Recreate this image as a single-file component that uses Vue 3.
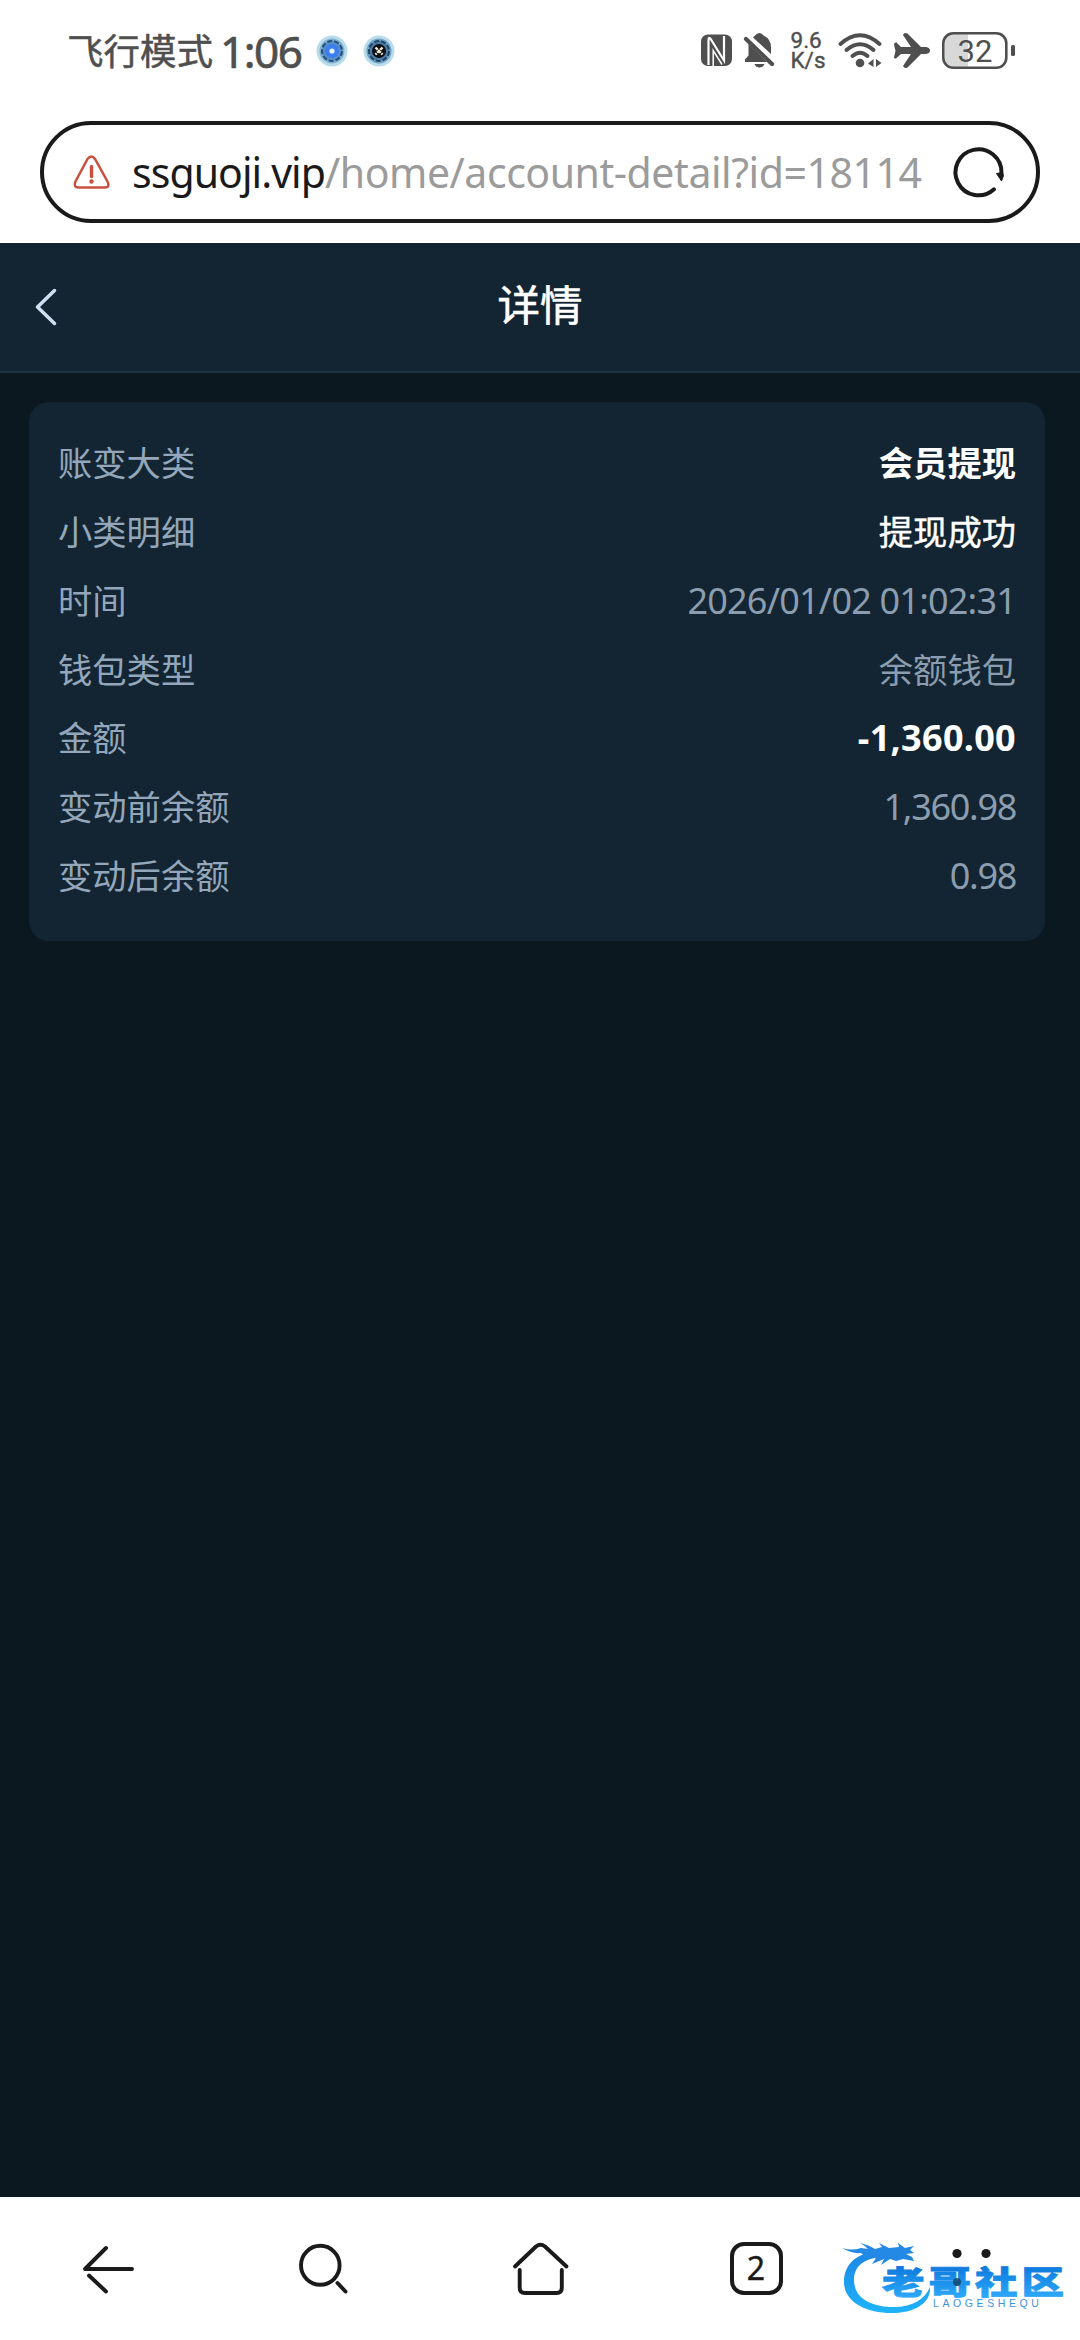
<script setup>
import { ref } from 'vue'

const rows = ref([
  { label: '账变大类', value: '会员提现', type: 'strong' },
  { label: '小类明细', value: '提现成功', type: 'white' },
  { label: '时间', value: '2026/01/02 01:02:31', type: 'num' },
  { label: '钱包类型', value: '余额钱包', type: '' },
  { label: '金额', value: '-1,360.00', type: 'amount' },
  { label: '变动前余额', value: '1,360.98', type: 'num balance' },
  { label: '变动后余额', value: '0.98', type: 'num balance' }
])
</script>

<template>
  <div class="screen">
    <!-- status bar -->
    <div class="status">
      <span class="mode">飞行模式</span>
      <span class="clock">1:06</span>
      <svg class="badges" viewBox="314 32 82 36" width="82" height="36">
        <circle cx="332" cy="50" r="15.5" fill="#b9dcea" />
        <circle cx="332" cy="50" r="12.5" fill="#7fb0cf" />
        <circle cx="332" cy="50" r="10" fill="#5b8fc4" stroke="#24507f" stroke-width="2" stroke-dasharray="5 2" />
        <circle cx="332" cy="50" r="7" fill="#3c7df0" />
        <circle cx="332" cy="50" r="2.6" fill="#e8f2ff" />
        <circle cx="379" cy="50" r="15.5" fill="#b9dcea" />
        <circle cx="379" cy="50" r="12.5" fill="#6fa0c2" />
        <circle cx="379" cy="50" r="10" fill="#4c7ba6" stroke="#1f4565" stroke-width="2" stroke-dasharray="5 2" />
        <circle cx="379" cy="50" r="7" fill="#0d0f14" />
        <path d="M375.500 46.500l7 7M382.500 46.500l-7 7" stroke="#f4ecd8" stroke-width="2.4" stroke-dasharray="3.2 1" />
      </svg>
      <div class="status-right">
        <svg viewBox="700 32 76 38" width="76" height="38">
          <rect x="701" y="34.5" width="31" height="31.5" rx="7" fill="#4f4f4f" />
          <path d="M708.500 65V40Q708.500 36 711 39.500L724 60.500V36" stroke="#fff" stroke-width="2.200" fill="none" />
          <path d="M713.200 66V50.500L722 64.500" stroke="#fff" stroke-width="1.500" fill="none" />
          <path d="M755 35.500q2-2.500 4.500-2.500t4 2.500q7.500 3.500 7.500 12v6.500L753 37.500z" fill="#4f4f4f" />
          <path d="M748.500 44L767 62H745v-2.500l3.500-4z" fill="#4f4f4f" />
          <path d="M746 39L772 64" stroke="#4f4f4f" stroke-width="4.200" stroke-linecap="round" />
          <path d="M754.500 64h10q-1.500 3.500-5 3.500t-5-3.500z" fill="#4f4f4f" />
        </svg>
        <div class="net"><span>9.6</span><span>K/s</span></div>
        <svg viewBox="838 32 44 38" width="44" height="38">
          <g fill="none" stroke="#4f4f4f" stroke-width="4" stroke-linecap="round">
            <path d="M840.500 44Q860 26.500 879.500 44" />
            <path d="M846.500 50Q860 38.500 873.500 50" />
            <path d="M852.500 56Q860 49.500 867.500 56" />
          </g>
          <circle cx="860" cy="63" r="4.300" fill="#4f4f4f" />
          <path d="M873.500 59v8l-5.500-3.500zM876 59v8l5.500-4z" fill="#4f4f4f" />
        </svg>
        <svg class="plane" viewBox="893 32 38 38" width="38" height="38">
          <path d="M896 42l5 5h10l-8-12q1-3 4.500-1.500L921 47h5q4 .5 4 3.500t-4 3.500h-5l-13.500 13.500q-3 1.500-4.500-1.500l8-12h-10l-5 4.500q-2 .5-2-1.500l1.500-6-1.500-6.500q0-2 2-2z" fill="#4f4f4f" />
        </svg>
        <svg class="battery" viewBox="942 32 74 38" width="74" height="38">
          <path d="M953 34h15v33h-15q-8-1-8-9V43q0-8 8-9z" fill="#d8d8d8" />
          <rect x="943.300" y="33.300" width="63" height="34.500" rx="10" fill="none" stroke="#4f4f4f" stroke-width="2.600" />
          <rect x="1011" y="45" width="4" height="11" rx="1.500" fill="#4f4f4f" />
          <text class="charge" x="957.500" y="61.500">32</text>
        </svg>
      </div>
    </div>

    <!-- address bar -->
    <div class="address">
      <svg viewBox="72 152 40 38" width="40" height="38" fill="none" stroke="#c9503f">
        <path d="M87.500 158L75.500 180.500Q73 186.500 78.500 186.500H104.500Q110.500 186.500 107.500 180.500L95 158Q91.500 153 87.500 158Z" stroke-width="2.500" />
        <path d="M91.500 165.500V175.500" stroke-width="3.400" stroke-linecap="round" />
        <circle cx="91.500" cy="180.500" r="2.200" fill="#c9503f" stroke="none" />
      </svg>
      <div class="url"><span class="host">ssguoji.vip</span><span class="path">/home/account-detail?id=18114</span></div>
      <svg viewBox="952 144 54 54" width="54" height="54">
        <path d="M994 188.300A23 23 0 1 1 1001.500 172" fill="none" stroke="#1a1a1a" stroke-width="4" stroke-linecap="round" />
        <path d="M996.500 172.500l6-1 1 3-2 5.500z" fill="#1a1a1a" stroke="#1a1a1a" stroke-linejoin="round" />
      </svg>
    </div>

    <!-- page header -->
    <div class="header">
      <svg class="back" viewBox="33 286 26 42" width="26" height="42">
        <path d="M54.500 290.500L37.500 307L54.500 323.500" />
      </svg>
      <h1>详情</h1>
    </div>

    <main>
      <div class="card">
        <div v-for="row in rows" :key="row.label" class="row">
          <span class="label">{{ row.label }}</span>
          <span class="value" :class="row.type">{{ row.value }}</span>
        </div>
      </div>
    </main>

    <!-- browser toolbar -->
    <nav class="toolbar">
      <svg viewBox="78 2239 60 60" width="60" height="60">
        <path d="M132 2269H85L106 2248M89 2275.500L106 2291.500" />
      </svg>
      <svg viewBox="294 2239 60 60" width="60" height="60">
        <ellipse cx="320.300" cy="2265.300" rx="19.300" ry="19.500" />
        <path d="M337.500 2283L345.500 2291.500" />
      </svg>
      <svg viewBox="510 2239 60 60" width="60" height="60">
        <path d="M515 2266.500L536 2246.500Q540.500 2243 545 2246.500L566.500 2266.500" />
        <path d="M519.700 2270V2288Q519.700 2293 525 2293H556.500Q561.800 2293 561.800 2288V2270" />
      </svg>
      <span class="tabs">2</span>
      <svg viewBox="942 2239 60 60" width="60" height="60">
        <g class="dots">
          <circle cx="957" cy="2253.500" r="4.600" />
          <circle cx="986" cy="2253.500" r="4.600" />
        </g>
      </svg>
    </nav>

    <!-- community watermark floating over the toolbar -->
    <svg class="mark" viewBox="838 2236 230 84" width="230" height="84">
      <defs>
        <linearGradient id="blue" x1="0" y1="2242" x2="0" y2="2314" gradientUnits="userSpaceOnUse">
          <stop offset="0" stop-color="#1b7fdf" />
          <stop offset="1" stop-color="#1fb4fc" />
        </linearGradient>
        <linearGradient id="word" x1="0" y1="-28" x2="0" y2="2" gradientUnits="userSpaceOnUse">
          <stop offset="0" stop-color="#0c78dc" />
          <stop offset="1" stop-color="#2ba6f8" />
        </linearGradient>
      </defs>
      <path d="M872 2252C850 2256 844 2270 844 2282C844 2302 866 2313 891 2313C915 2313 931 2303 930 2287C925 2299 913 2307 894 2307C869 2307 854 2297 854 2280C854 2266 864 2259 880 2257Z" fill="url(#blue)" />
      <path d="M842 2248Q852 2251 861 2248L868 2249Q864 2245 860 2243Q869 2245 875 2249L882 2247L879 2243L889 2248L899 2247L898 2243L905 2248L914 2246L910 2250L914 2253L906 2254L912 2257L914 2261L903 2259L896 2261L890 2259L881 2265L884 2259L872 2264L876 2258Q866 2258 861 2253Q852 2254 842 2248Z" fill="#2389e4" />
      <text class="mark-cn" transform="translate(882 2293.500) scale(1.330 1)" x="0" y="0" fill="url(#word)" stroke="url(#word)">老哥社区</text>
      <circle cx="957" cy="2282" r="4" fill="#123f66" opacity=".8" />
      <text class="mark-en" x="933" y="2306.500">LAOGESHEQU</text>
    </svg>
  </div>
</template>

<style>
body {
  background: #0b1820;
}
</style>

<style scoped>
.screen {
  position: relative;
  width: 1080px;
  height: 2340px;
  display: flex;
  flex-direction: column;
  overflow: hidden;
  background: #0b1820;
  font-family: "Noto Sans", "Noto Sans CJK SC", sans-serif;
}

svg {
  display: block;
  flex: none;
  overflow: visible;
}

/* Status bar */
.status {
  height: 101px;
  box-sizing: border-box;
  padding: 0 64px 0 67px;
  display: flex;
  align-items: center;
  background: #fff;
  color: #4f4f4f;
  white-space: nowrap;
}

.mode {
  font-size: 36.500px;
  line-height: 50px;
  -webkit-text-stroke: 0.5px #4f4f4f;
}

.clock {
  margin-left: 7px;
  width: 94px;
  font-size: 44px;
  line-height: 50px;
  letter-spacing: -1.500px;
  -webkit-text-stroke: 0.7px #4f4f4f;
}

.status-right {
  margin-left: auto;
  display: flex;
  align-items: center;
}

.plane,
.battery {
  margin-left: 11px;
}

.net {
  width: 47.500px;
  margin-left: 14.500px;
  display: flex;
  flex-direction: column;
  font-family: Roboto, sans-serif;
  font-size: 22.500px;
  line-height: 19.500px;
  -webkit-text-stroke: 0.4px #4f4f4f;
}

.charge {
  font-family: Roboto, sans-serif;
  font-size: 31px;
  fill: #4f4f4f;
}

/* Address bar */
.address {
  position: relative;
  height: 142px;
  box-sizing: border-box;
  border: solid #fff;
  border-width: 20px 40px;
  padding: 0 34px 0 32px;
  display: flex;
  align-items: center;
  background: #fff;
}

.address::before {
  content: "";
  position: absolute;
  inset: 0;
  border: 4px solid #1a1a1a;
  border-radius: 51px;
}

.url {
  flex: 1;
  min-width: 0;
  margin: 0 28px 0 20px;
  white-space: nowrap;
  font-size: 41px;
  line-height: 60px;
}

.host {
  color: #1a1a1a;
  letter-spacing: -0.950px;
}

.path {
  color: #9b9b9b;
  letter-spacing: -0.450px;
}

/* Page header */
.header {
  height: 130px;
  box-sizing: border-box;
  border-bottom: 2px solid #1e3342;
  display: grid;
  grid-template-columns: 1fr auto 1fr;
  align-items: center;
  background: #132533;
}

.back {
  margin-left: 33px;
  fill: none;
  stroke: #cfe0f2;
  stroke-width: 3.500;
  stroke-linecap: round;
  stroke-linejoin: round;
}

h1 {
  margin: 0;
  padding-bottom: 5px;
  font-size: 42.500px;
  line-height: 60px;
  font-weight: 400;
  color: #fff;
  -webkit-text-stroke: 0.6px #fff;
}

/* Details */
main {
  flex: 1;
  padding: 29px 35px 0 29px;
}

.card {
  height: 539px;
  box-sizing: border-box;
  padding: 27px 29px 0;
  border-radius: 20px;
  background: #132533;
}

.row {
  height: 68.750px;
  display: flex;
  align-items: center;
  justify-content: space-between;
  font-size: 34.300px;
  line-height: 50px;
  color: #94a7ba;
}

.value {
  color: #8b9dae;
}

.value.white {
  color: #fff;
  -webkit-text-stroke: 0.4px #fff;
}

.value.strong {
  color: #fff;
  font-weight: 700;
}

.value.num {
  font-size: 36px;
  letter-spacing: -0.800px;
}

.value.balance {
  letter-spacing: -1.300px;
}

.value.amount {
  color: #fff;
  font-size: 36px;
  font-weight: 700;
  letter-spacing: 0.300px;
}

/* Toolbar */
.toolbar {
  height: 143px;
  display: grid;
  grid-template-columns: repeat(5, 1fr);
  justify-items: center;
  align-items: center;
  background: #fff;
}

.toolbar svg {
  fill: none;
  stroke: #1a1a1a;
  stroke-width: 3.900;
  stroke-linecap: round;
  stroke-linejoin: round;
}

.toolbar .dots {
  fill: #1a1a1a;
  stroke: none;
}

.tabs {
  width: 53px;
  height: 53px;
  box-sizing: border-box;
  border: 4px solid #1a1a1a;
  border-radius: 14px;
  text-align: center;
  font-size: 32px;
  line-height: 44px;
  color: #1a1a1a;
  -webkit-text-stroke: 0.4px #1a1a1a;
}

/* Watermark */
.mark {
  position: absolute;
  left: 838px;
  top: 2236px;
}

.mark-cn {
  font-family: "Noto Sans CJK SC", sans-serif;
  font-size: 32px;
  font-weight: 900;
  letter-spacing: 3px;
  stroke-width: 0.8px;
}

.mark-en {
  font-family: "Liberation Sans", sans-serif;
  font-size: 10.500px;
  letter-spacing: 3.600px;
  fill: #3d93da;
}
</style>
